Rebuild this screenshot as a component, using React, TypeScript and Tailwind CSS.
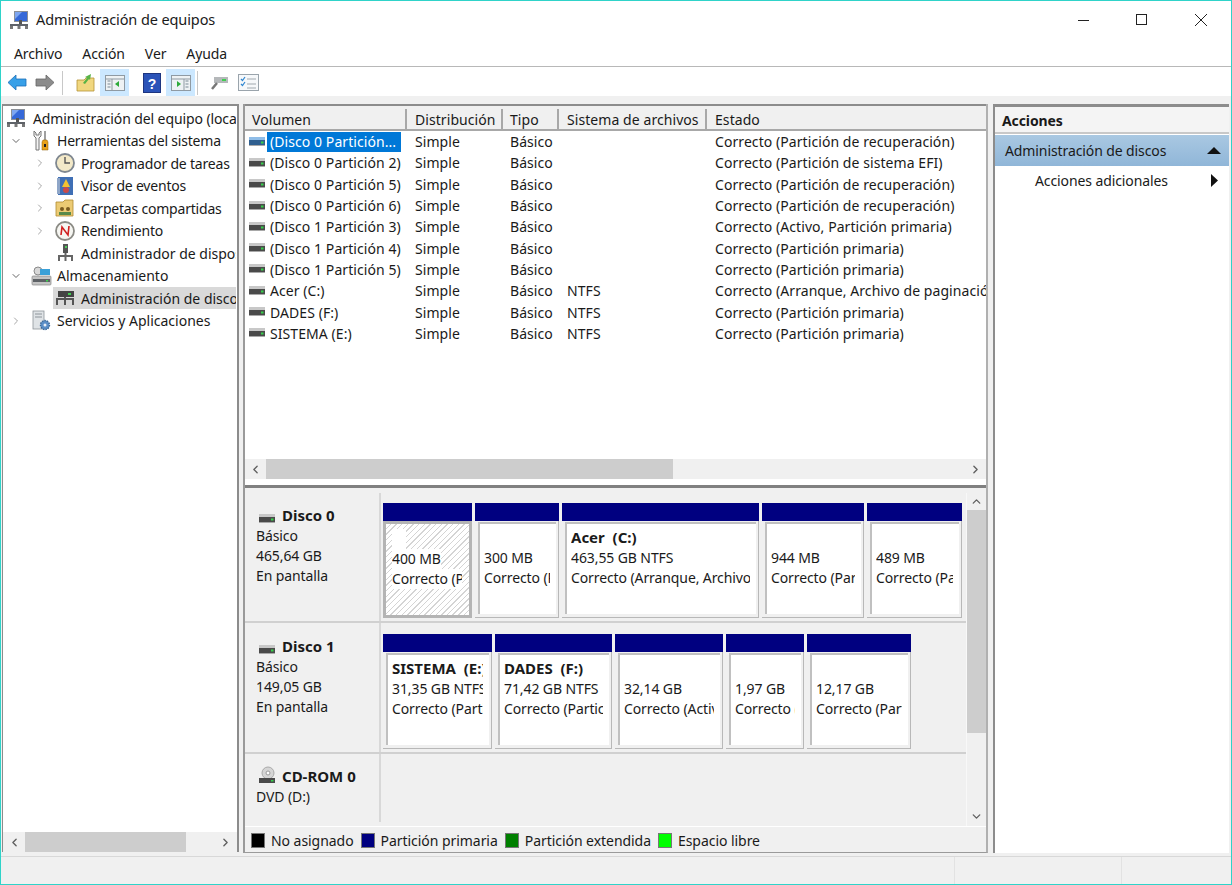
import { ChevronDown, ChevronLeft, ChevronRight, ChevronUp } from "lucide-react";
import type { ReactNode } from "react";

const DiskIcon = ({ blue = false }: { blue?: boolean }) => (
  <svg width="18" height="12" viewBox="0 0 18 12" className="shrink-0">
    <rect x="1" y="1" width="16" height="3" fill={blue ? "#8fbde8" : "#c8c8c8"} />
    <rect x="1" y="4" width="16" height="5" fill={blue ? "#2f5f8f" : "#4a4a4a"} />
    <rect x="13" y="5.5" width="2.5" height="2" fill="#35d04a" />
    <rect x="1" y="9" width="16" height="1" fill="#a8a8a8" />
  </svg>
);

const ComputerIcon = () => (
  <svg width="20" height="20" viewBox="0 0 20 20" className="shrink-0">
    <rect x="5" y="1" width="14" height="11" fill="#8a8f96" />
    <rect x="6" y="2" width="12" height="9" fill="#3568d8" />
    <path d="M6 2h7l-7 7z" fill="#7ea6f0" />
    <rect x="10" y="10" width="3" height="4" fill="#555" />
    <rect x="1" y="14" width="18" height="2" fill="#5e6268" />
    <rect x="1" y="16" width="3" height="3" fill="#777" />
    <rect x="8.5" y="16" width="3" height="3" fill="#777" />
    <rect x="16" y="16" width="3" height="3" fill="#777" />
  </svg>
);

const ToolsIcon = () => (
  <svg width="18" height="22" viewBox="0 0 18 22" className="shrink-0">
    <path d="M2 1v5l2 2v12h3V8l2-2V1L7 3v2H4V3z" fill="#f4f4f4" stroke="#777" strokeWidth="1" />
    <rect x="12" y="1" width="2" height="9" fill="#a0a0a0" />
    <path d="M11 10h4l1 2v8h-6v-8z" fill="#e9a21a" stroke="#8a5a00" strokeWidth="0.5" />
    <rect x="12" y="14" width="2" height="3" fill="#222" />
  </svg>
);

const ClockIcon = () => (
  <svg width="20" height="20" viewBox="0 0 20 20" className="shrink-0">
    <circle cx="10" cy="10" r="9" fill="#f3e9c8" stroke="#7f8790" strokeWidth="1.8" />
    <path d="M10 4v6h5" fill="none" stroke="#555" strokeWidth="1.4" />
  </svg>
);

const EventIcon = () => (
  <svg width="18" height="20" viewBox="0 0 18 20" className="shrink-0">
    <rect x="2" y="1" width="15" height="18" fill="#3f6fb5" />
    <rect x="1" y="2" width="3" height="16" fill="#8fa6c8" />
    <path d="M10 3l4 8H6z" fill="#f2c230" />
    <circle cx="10" cy="14" r="3" fill="#c94a4a" />
  </svg>
);

const SharedIcon = () => (
  <svg width="20" height="20" viewBox="0 0 20 20" className="shrink-0">
    <path d="M1 4h7l2-2h8v16H1z" fill="#eccb74" stroke="#b08a30" strokeWidth="0.8" />
    <circle cx="7" cy="11" r="2" fill="#7a5c20" />
    <circle cx="13" cy="11" r="2" fill="#7a5c20" />
    <rect x="4" y="14" width="12" height="3" fill="#5a8a4a" />
  </svg>
);

const PerfIcon = () => (
  <svg width="20" height="20" viewBox="0 0 20 20" className="shrink-0">
    <circle cx="10" cy="10" r="9" fill="#f6f6f2" stroke="#8b8b85" strokeWidth="1.8" />
    <path d="M6 14L7 6l6 8 1-9" fill="none" stroke="#d02020" strokeWidth="1.6" />
  </svg>
);

const DeviceIcon = () => (
  <svg width="18" height="20" viewBox="0 0 18 20" className="shrink-0">
    <rect x="7" y="1" width="5" height="9" fill="#555" />
    <rect x="9" y="3" width="2" height="2" fill="#4fce5d" />
    <path d="M2 13h15M3 13v5M9.5 10v8M16 13v5" fill="none" stroke="#666" strokeWidth="2" />
  </svg>
);

const StorageIcon = () => (
  <svg width="21" height="20" viewBox="0 0 21 20" className="shrink-0">
    <rect x="1" y="10" width="19" height="9" rx="1" fill="#c4c4c4" stroke="#888" strokeWidth="0.7" />
    <rect x="2" y="13" width="17" height="3" fill="#5e6266" />
    <rect x="15" y="14" width="2" height="1.5" fill="#3fcf50" />
    <circle cx="7" cy="5" r="4" fill="#d8d8d8" stroke="#8a8a8a" />
    <rect x="9" y="3" width="10" height="6" fill="#3aa0d8" />
  </svg>
);

const DiskMgmtIcon = () => (
  <svg width="20" height="16" viewBox="0 0 20 16" className="shrink-0">
    <rect x="3" y="1" width="16" height="6" fill="#444" />
    <rect x="13" y="3" width="3" height="2" fill="#3fcf50" />
    <path d="M1 9h18" stroke="#555" strokeWidth="2" />
    <path d="M2 9v6M10 7v8M18 9v6" stroke="#555" strokeWidth="2" fill="none" />
  </svg>
);

const ServicesIcon = () => (
  <svg width="20" height="22" viewBox="0 0 20 22" className="shrink-0">
    <rect x="2" y="1" width="11" height="18" fill="#dfe3e6" stroke="#8d949a" strokeWidth="0.8" />
    <path d="M4 4h7M4 7h7" stroke="#8d949a" />
    <circle cx="14" cy="15" r="4.5" fill="#5b8fc7" stroke="#3b6897" strokeDasharray="1.5 1" strokeWidth="1.4" />
    <circle cx="14" cy="15" r="1.5" fill="#e8eef5" />
  </svg>
);

const TreeRow = ({ indent, arrow, icon, label, selected, wide }: { indent: number; arrow?: "right" | "down"; icon: ReactNode; label: string; selected?: boolean; wide?: boolean }) => (
  <div className="flex h-[22.5px] items-center" style={{ paddingLeft: indent }}>
    <span className="flex w-[19px] shrink-0 justify-start">
      {arrow === "down" && <ChevronDown size={12} strokeWidth={2} className="text-[#666]" />}
      {arrow === "right" && <ChevronRight size={12} strokeWidth={2} className="text-[#a6a6a6]" />}
    </span>
    <div className={`flex h-[22px] min-w-0 flex-1 items-center gap-[7px] overflow-hidden whitespace-nowrap pl-[3px] ${wide ? "tracking-[0px]" : "tracking-[-0.2px]"} ${selected ? "bg-[#d9d9d9]" : ""}`}>
      <span className="flex w-[18px] shrink-0 justify-center">{icon}</span>
      <span>{label}</span>
    </div>
  </div>
);

const volumes = [
  ["(Disco 0 Partición...", "", "Correcto (Partición de recuperación)"],
  ["(Disco 0 Partición 2)", "", "Correcto (Partición de sistema EFI)"],
  ["(Disco 0 Partición 5)", "", "Correcto (Partición de recuperación)"],
  ["(Disco 0 Partición 6)", "", "Correcto (Partición de recuperación)"],
  ["(Disco 1 Partición 3)", "", "Correcto (Activo, Partición primaria)"],
  ["(Disco 1 Partición 4)", "", "Correcto (Partición primaria)"],
  ["(Disco 1 Partición 5)", "", "Correcto (Partición primaria)"],
  ["Acer (C:)", "NTFS", "Correcto (Arranque, Archivo de paginación, Volcado)"],
  ["DADES (F:)", "NTFS", "Correcto (Partición primaria)"],
  ["SISTEMA (E:)", "NTFS", "Correcto (Partición primaria)"],
];

const headers = [
  ["Volumen", "w-[162px] pl-[7px]"],
  ["Distribución", "w-[96px] pl-[8px]"],
  ["Tipo", "w-[56px] pl-[7px]"],
  ["Sistema de archivos", "w-[148px] pl-[8px]"],
  ["Estado", "flex-1 pl-[8px]"],
];

const Partition = ({ width, name, size, state, selected }: { width: number; name?: string; size: string; state: string; selected?: boolean }) => (
  <div className="flex shrink-0 flex-col" style={{ width }}>
    <div className="h-[18px] bg-[#000080]" />
    {selected ? (
      <div className="flex-1 border-[3px] border-[#b4b4b4] bg-[repeating-linear-gradient(135deg,#ffffff_0px,#ffffff_3px,#d4d4d4_3px,#d4d4d4_4px)] pl-[6px] pt-[5px]">
        <div className="h-[20px] w-[14px] bg-white" />
        <div className="w-fit max-w-[70px] overflow-hidden whitespace-nowrap bg-white leading-[20px]">{size}</div>
        <div className="w-[70px] overflow-hidden whitespace-nowrap bg-white leading-[20px]">{state}</div>
      </div>
    ) : (
      <div className="flex-1 border-b border-r border-[#b8b8b8] bg-[#f0f0f0] pb-[3px] pl-[3px] pr-[2px] pt-[1px]">
        <div className="h-full overflow-hidden whitespace-nowrap border-l-2 border-t-2 border-[#c0c0c0] bg-white pl-[4px] pr-[6px] pt-[3px] leading-[20px]">
          <div className="h-[21px] overflow-hidden whitespace-pre text-[15px] font-bold tracking-[0px]">{name}</div>
          <div className="overflow-hidden">{size}</div>
          <div className="overflow-hidden">{state}</div>
        </div>
      </div>
    )}
  </div>
);

const DiskInfo = ({ title, lines, cd, top }: { title: string; lines: string[]; cd?: boolean; top: string }) => (
  <div className={`w-[136px] shrink-0 border-r-2 border-[#d8d8d8] pl-[11px] leading-[20px] ${top}`}>
    <div className="mb-[1px] flex items-end gap-[6px] text-[15px] font-bold tracking-[0px]">
      <span className="ml-[2px]">
        {cd ? (
          <svg width="18" height="20" viewBox="0 0 18 20">
            <circle cx="10" cy="7" r="6" fill="#d5d5d5" stroke="#aaa" />
            <circle cx="10" cy="7" r="2" fill="#fff" stroke="#999" />
            <rect x="1" y="12" width="16" height="5" fill="#4a4a4a" />
            <rect x="13" y="14" width="2.5" height="1.5" fill="#35d04a" />
          </svg>
        ) : (
          <DiskIcon />
        )}
      </span>
      <span>{title}</span>
    </div>
    {lines.map((line) => (
      <div key={line}>{line}</div>
    ))}
  </div>
);

const Legend = ({ color, label }: { color: string; label: string }) => (
  <div className="flex items-center gap-[6px] tracking-[-0.05px]">
    <span className="h-[15px] w-[14px] border border-[#777]" style={{ background: color }} />
    <span>{label}</span>
  </div>
);

export default function App() {
  return (
    <div className="flex h-[885px] w-[1232px] flex-col overflow-hidden border border-[#2fd3c9] bg-white font-['Noto_Sans',sans-serif] text-[14px] tracking-[-0.1px] text-[#1a1a1a]">
      {/* title bar */}
      <div className="flex h-[37px] shrink-0 items-center pl-[8px]">
        <ComputerIcon />
        <span className="ml-[7px] flex-1 text-[14.5px]">Administración de equipos</span>
        <div className="flex items-center">
          <svg width="58" height="14" viewBox="0 0 58 14"><path d="M0 7.5h11" stroke="#222" /></svg>
          <svg width="58" height="14" viewBox="0 0 58 14"><rect x="0.5" y="1.5" width="10" height="10" fill="none" stroke="#222" /></svg>
          <svg width="29" height="14" viewBox="0 0 29 14" className="mr-[8px]"><path d="M1 1l12 12M13 1L1 13" stroke="#222" /></svg>
        </div>
      </div>

      {/* menu */}
      <div className="flex h-[29px] shrink-0 items-center gap-[20px] border-b border-[#b8b8b8] pl-[13px] pt-[2px]">
        <span>Archivo</span>
        <span>Acción</span>
        <span>Ver</span>
        <span>Ayuda</span>
      </div>

      {/* toolbar */}
      <div className="flex h-[29px] shrink-0 items-center pl-[6px] pt-[2px]">
        <svg width="20" height="17" viewBox="0 0 20 17"><path d="M9 1L1 8.5 9 16v-4h10V5H9z" fill="#38a0e8" stroke="#1d6fb8" strokeWidth="0.8" /></svg>
        <svg width="20" height="17" viewBox="0 0 20 17" className="ml-[8px]"><path d="M11 1l8 7.5-8 7.5v-4H1V5h10z" fill="#8c8c8c" stroke="#666" strokeWidth="0.8" /></svg>
        <span className="ml-[7px] h-[24px] w-px bg-[#c8c8c8]" />
        <svg width="20" height="20" viewBox="0 0 20 20" className="ml-[13px]">
          <path d="M1 7h7l2-2h8v13H1z" fill="#f1d77f" stroke="#b59336" strokeWidth="0.8" />
          <path d="M7 10l4-5-2-1 6-3-1 6-1-1-4 5z" fill="#59b346" />
        </svg>
        <span className="ml-[4px] flex h-[27px] w-[29px] items-center justify-center bg-[#cce8ff]">
          <svg width="20" height="18" viewBox="0 0 20 18"><rect x="0.5" y="1.5" width="19" height="15" fill="#eef2f4" stroke="#8f9aa3" /><path d="M1 5h18M7 5v11" stroke="#8f9aa3" /><path d="M2.5 7h3M2.5 10h3M2.5 13h3" stroke="#7a8a96" /><path d="M14 7l-4 3 4 3z" fill="#2eaa3a" /></svg>
        </span>
        <svg width="18" height="20" viewBox="0 0 18 20" className="ml-[14px]">
          <rect x="0.5" y="0.5" width="17" height="19" fill="#2b53b8" stroke="#1d3580" />
          <text x="9" y="15.5" textAnchor="middle" fill="#fff" fontSize="14" fontWeight="700" fontFamily="Liberation Sans">?</text>
        </svg>
        <span className="ml-[5px] flex h-[27px] w-[29px] items-center justify-center bg-[#cce8ff]">
          <svg width="20" height="18" viewBox="0 0 20 18"><rect x="0.5" y="1.5" width="19" height="15" fill="#eef2f4" stroke="#8f9aa3" /><path d="M1 5h18M13 5v11" stroke="#8f9aa3" /><path d="M14.5 7h3M14.5 10h3M14.5 13h3" stroke="#7a8a96" /><path d="M6 7l4 3-4 3z" fill="#2eaa3a" /></svg>
        </span>
        <span className="ml-[2px] h-[24px] w-px bg-[#c8c8c8]" />
        <svg width="20" height="18" viewBox="0 0 20 18" className="ml-[11px]">
          <rect x="5" y="3" width="14" height="6" fill="#b5b8ba" />
          <rect x="13" y="5" width="4" height="2" fill="#3fcf50" />
          <path d="M8 9l-5 6" stroke="#777" strokeWidth="2.5" />
        </svg>
        <svg width="21" height="17" viewBox="0 0 21 17" className="ml-[9px]">
          <rect x="0.5" y="0.5" width="20" height="16" fill="#f6f8fa" stroke="#9aa4ac" />
          <path d="M3 5l1.5 1.5L7 3M3 10l1.5 1.5L7 8" fill="none" stroke="#2f86d0" strokeWidth="1.2" />
          <path d="M9 5h9M9 10h9M9 14h9" stroke="#a0a8ae" />
        </svg>
      </div>

      {/* panes */}
      <div className="flex min-h-0 flex-1 bg-[#f0f0f0] pt-[8px]">
        {/* tree */}
        <div className="ml-[1px] flex h-[748px] w-[237px] shrink-0 flex-col border-r-2 border-t-2 border-l border-[#8c8c8c] bg-white">
          <div className="min-h-0 flex-1 overflow-hidden pl-[5px] pr-[1px] pt-[1px]">
            <div className="-ml-[2px] flex h-[22.5px] items-center gap-[7px] overflow-hidden whitespace-nowrap tracking-[-0.1px]">
              <ComputerIcon />
              <span>Administración del equipo (local)</span>
            </div>
            <TreeRow indent={2} arrow="down" icon={<ToolsIcon />} label="Herramientas del sistema" />
            <TreeRow indent={26} arrow="right" icon={<ClockIcon />} label="Programador de tareas" />
            <TreeRow indent={26} arrow="right" icon={<EventIcon />} label="Visor de eventos" />
            <TreeRow indent={26} arrow="right" icon={<SharedIcon />} label="Carpetas compartidas" />
            <TreeRow indent={26} arrow="right" icon={<PerfIcon />} label="Rendimiento" />
            <TreeRow indent={26} icon={<DeviceIcon />} label="Administrador de dispositivos" wide />
            <TreeRow indent={2} arrow="down" icon={<StorageIcon />} label="Almacenamiento" wide />
            <TreeRow indent={26} icon={<DiskMgmtIcon />} label="Administración de discos" selected wide />
            <TreeRow indent={2} arrow="right" icon={<ServicesIcon />} label="Servicios y Aplicaciones" wide />
          </div>
          <div className="flex h-[20px] shrink-0 items-center bg-[#f0f0f0]">
            <span className="flex w-[22px] justify-center"><ChevronLeft size={13} strokeWidth={2.5} className="text-[#606060]" /></span>
            <div className="h-full w-[161px] bg-[#cdcdcd]" />
            <span className="flex-1" />
            <span className="flex w-[24px] justify-center"><ChevronRight size={13} strokeWidth={2.5} className="text-[#606060]" /></span>
          </div>
        </div>

        {/* center */}
        <div className="ml-[4px] flex h-[749px] w-[745px] shrink-0 flex-col border-l-2 border-r-2 border-b border-[#9a9a9a] border-r-[#b0b0b0]">
          {/* volume list */}
          <div className="flex h-[381px] shrink-0 flex-col border-t-2 border-[#8c8c8c] bg-white">
            <div className="flex h-[25px] shrink-0 border-b-2 border-[#a8a8a8] bg-[#f0f0f0] pt-[3px]">
              {headers.map(([label, w]) => (
                <div key={label} className={`${w} flex items-center whitespace-nowrap border-r-2 border-[#a8a8a8] tracking-[0.07px] last:border-r-0`}>{label}</div>
              ))}
            </div>
            <div className="min-h-0 flex-1 overflow-hidden tracking-[0.07px]">
              {volumes.map(([name, fs, state], i) => (
                <div key={name} className="flex h-[21.3px] items-center whitespace-nowrap">
                  <div className="flex w-[161px] shrink-0 items-center gap-[1px] pl-[3px]">
                    <DiskIcon blue={i === 0} />
                    <span className={i === 0 ? "flex h-[20px] w-[134px] items-center bg-[#0078d7] pl-[3px] text-white" : "w-[134px] pl-[3px]"}>{name}</span>
                  </div>
                  <div className="w-[97px] shrink-0 pl-[9px]">Simple</div>
                  <div className="w-[56px] shrink-0 pl-[7px]">Básico</div>
                  <div className="w-[148px] shrink-0 pl-[8px]">{fs}</div>
                  <div className="flex-1 overflow-hidden pl-[8px]">{state}</div>
                </div>
              ))}
            </div>
            <div className="flex h-[20px] shrink-0 items-center bg-[#f0f0f0]">
              <span className="flex w-[21px] justify-center"><ChevronLeft size={13} strokeWidth={2.5} className="text-[#606060]" /></span>
              <div className="h-full w-[407px] bg-[#cdcdcd]" />
              <span className="flex-1" />
              <span className="flex w-[22px] justify-center"><ChevronRight size={13} strokeWidth={2.5} className="text-[#606060]" /></span>
            </div>
            <div className="h-[6px] shrink-0 bg-white" />
          </div>

          {/* disk graph */}
          <div className="flex min-h-0 flex-1 flex-col border-t-[3px] border-[#808080] bg-[#f0f0f0]">
            <div className="flex min-h-0 flex-1 pt-[5px]">
              <div className="min-w-0 flex-1 overflow-hidden">
                <div className="flex h-[130px] border-b-2 border-[#d0d0d0]">
                  <DiskInfo top="pt-[12px]" title="Disco 0" lines={["Básico", "465,64 GB", "En pantalla"]} />
                  <div className="flex gap-[3px] pb-[3px] pl-[2px] pt-[10px]">
                    <Partition width={89} size="400 MB" state="Correcto (Partición" selected />
                    <Partition width={84} size="300 MB" state="Correcto (Partición" />
                    <Partition width={197} name="Acer  (C:)" size="463,55 GB NTFS" state="Correcto (Arranque, Archivo de paginación)" />
                    <Partition width={102} size="944 MB" state="Correcto (Partición" />
                    <Partition width={95} size="489 MB" state="Correcto (Partición" />
                  </div>
                </div>
                <div className="flex h-[131px] border-b-2 border-[#d0d0d0]">
                  <DiskInfo top="pt-[13px]" title="Disco 1" lines={["Básico", "149,05 GB", "En pantalla"]} />
                  <div className="flex gap-[3px] pb-[3px] pl-[2px] pt-[11px]">
                    <Partition width={109} name="SISTEMA  (E:)" size="31,35 GB NTFS" state="Correcto (Partición" />
                    <Partition width={117} name="DADES  (F:)" size="71,42 GB NTFS" state="Correcto (Partición" />
                    <Partition width={108} size="32,14 GB" state="Correcto (Activo" />
                    <Partition width={78} size="1,97 GB" state="Correcto (Partición" />
                    <Partition width={104} size="12,17 GB" state="Correcto (Partición" />
                  </div>
                </div>
                <div className="flex h-[68px]">
                  <DiskInfo cd top="pt-[12px]" title="CD-ROM 0" lines={["DVD (D:)"]} />
                </div>
              </div>
              <div className="flex w-[20px] shrink-0 flex-col border-l border-[#f8f8f8]">
                <span className="flex h-[17px] items-center justify-center"><ChevronUp size={13} strokeWidth={2.5} className="text-[#606060]" /></span>
                <div className="h-[223px] bg-[#cdcdcd]" />
                <span className="flex-1" />
                <span className="flex h-[20px] items-center justify-center"><ChevronDown size={13} strokeWidth={2.5} className="text-[#606060]" /></span>
              </div>
            </div>
            <div className="flex h-[26px] shrink-0 items-center gap-[7px] border-t border-white pl-[6px] pt-[2px]">
              <Legend color="#000000" label="No asignado" />
              <Legend color="#000080" label="Partición primaria" />
              <Legend color="#008000" label="Partición extendida" />
              <Legend color="#00ff00" label="Espacio libre" />
            </div>
          </div>
        </div>

        {/* actions */}
        <div className="ml-[5px] flex h-[749px] w-[236px] shrink-0 flex-col border-l-2 border-t-[3px] border-[#8c8c8c] bg-white">
          <div className="flex h-[27px] shrink-0 items-center border-b-2 border-[#c8c8c8] bg-[#f4f4f4] pl-[7px] pt-[2px] font-bold">Acciones</div>
          <div className="mt-[1px] flex h-[31px] shrink-0 items-center justify-between bg-gradient-to-b from-[#a9c8e2] to-[#90b6d8] pl-[10px] pr-[8px]">
            <span>Administración de discos</span>
            <svg width="14" height="7" viewBox="0 0 14 7"><path d="M7 0l7 7H0z" fill="#111" /></svg>
          </div>
          <div className="flex h-[28px] shrink-0 items-center justify-between pl-[40px] pr-[11px]">
            <span>Acciones adicionales</span>
            <svg width="7" height="13" viewBox="0 0 7 13"><path d="M0 0l7 6.5L0 13z" fill="#111" /></svg>
          </div>
        </div>
      </div>

      {/* status bar */}
      <div className="flex h-[28px] shrink-0 border-t border-[#d8d8d8] bg-[#f0f0f0]">
        <div className="w-[954px] border-r border-[#e2e2e2]" />
        <div className="w-[167px] border-r border-[#e2e2e2]" />
        <div className="flex-1" />
      </div>
    </div>
  );
}
